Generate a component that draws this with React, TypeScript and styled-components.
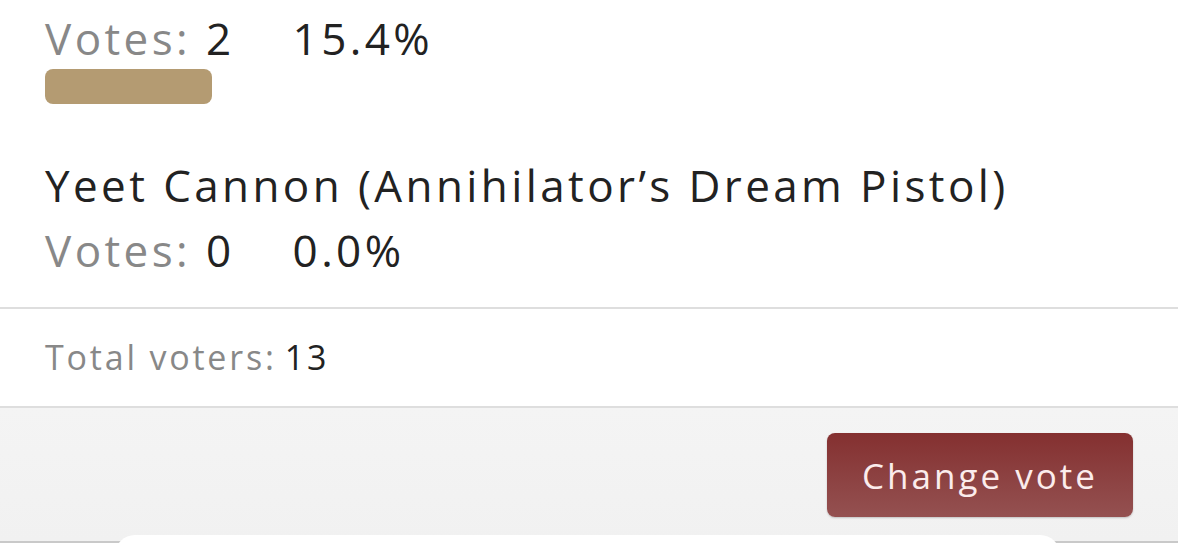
import React from 'react';
import styled, {createGlobalStyle} from 'styled-components';

const GlobalStyle = createGlobalStyle`
  html, body {
    margin: 0;
    padding: 0;
    background: #fff;
  }
  body {
    width: 1178px;
    height: 543px;
    overflow: hidden;
    font-family: "Open Sans", "Liberation Sans", sans-serif;
    color: #222;
  }
`;

const Page = styled.div`
  position: relative;
  width: 1178px;
  height: 543px;
  display: flex;
  flex-direction: column;
  overflow: hidden;
`;

const Results = styled.div`
  background: white;
  padding: 7px 45px 26px;
`;

const Option = styled.div`
  & + & {
    padding-top: 50px;
  }
`;

const Title = styled.div`
  font-size: 44px;
  line-height: 62px;
  letter-spacing: 3.4px;
  margin-bottom: 3px;
  color: #222;
`;

const Votes = styled.div`
  display: flex;
  font-size: 44px;
  line-height: 62px;
  letter-spacing: 3.4px;
  color: #222;
  >.label{
    color: #888;
    margin-right: 15px;
  }
  >.percent{
    margin-left: 58px;
  }
`;

const Bar = styled.div`
  height: 35px;
  border-radius: 8px;
  background: #b49b72;
`;

const Divider = styled.div`
  height: 2px;
  background: #dedede;
`;

const Total = styled.div`
  padding: 28px 45px 29px;
  font-size: 34px;
  line-height: 40px;
  letter-spacing: 2.8px;
  color: #222;
  >.label{
    color: #888;
    margin-right: 8px;
  }
`;

const Footer = styled.div`
  flex: 1;
  display: flex;
  justify-content: flex-end;
  align-items: flex-start;
  padding: 25px 45px 0;
  background: linear-gradient(#f4f4f4, #f1f1f1);
  border-bottom: 2px solid #c9c9c9;
`;

const Button = styled.button`
  width: 306px;
  height: 84px;
  border: none;
  border-radius: 8px;
  background: linear-gradient(#843030, #945151);
  box-shadow: 0 1px 2px rgba(0,0,0,0.2);
  color: #fbecec;
  font-family: inherit;
  font-size: 35px;
  letter-spacing: 3px;
  padding: 0;
`;

const Sheet = styled.div`
  position: absolute;
  left: 115px;
  right: 118px;
  bottom: -12px;
  height: 20px;
  background: white;
  border-radius: 40px 40px 0 0;
`;

const options = [
  {name: '', votes: 2, percent: '15.4%', width: 167},
  {name: 'Yeet Cannon (Annihilator\u2019s Dream Pistol)', votes: 0, percent: '0.0%', width: 0},
];

export default function App() {
  return (
    <Page>
      <GlobalStyle/>
      <Results>
        {options.map((o, i) => (
          <Option key={i}>
            {o.name && <Title>{o.name}</Title>}
            <Votes>
              <span className="label">Votes:</span>
              <span>{o.votes}</span>
              <span className="percent">{o.percent}</span>
            </Votes>
            {o.width > 0 && <Bar style={{width: o.width}}/>}
          </Option>
        ))}
      </Results>
      <Divider/>
      <Total>
        <span className="label">Total voters:</span>13
      </Total>
      <Divider/>
      <Footer>
        <Button>Change vote</Button>
      </Footer>
      <Sheet/>
    </Page>
  );
}
